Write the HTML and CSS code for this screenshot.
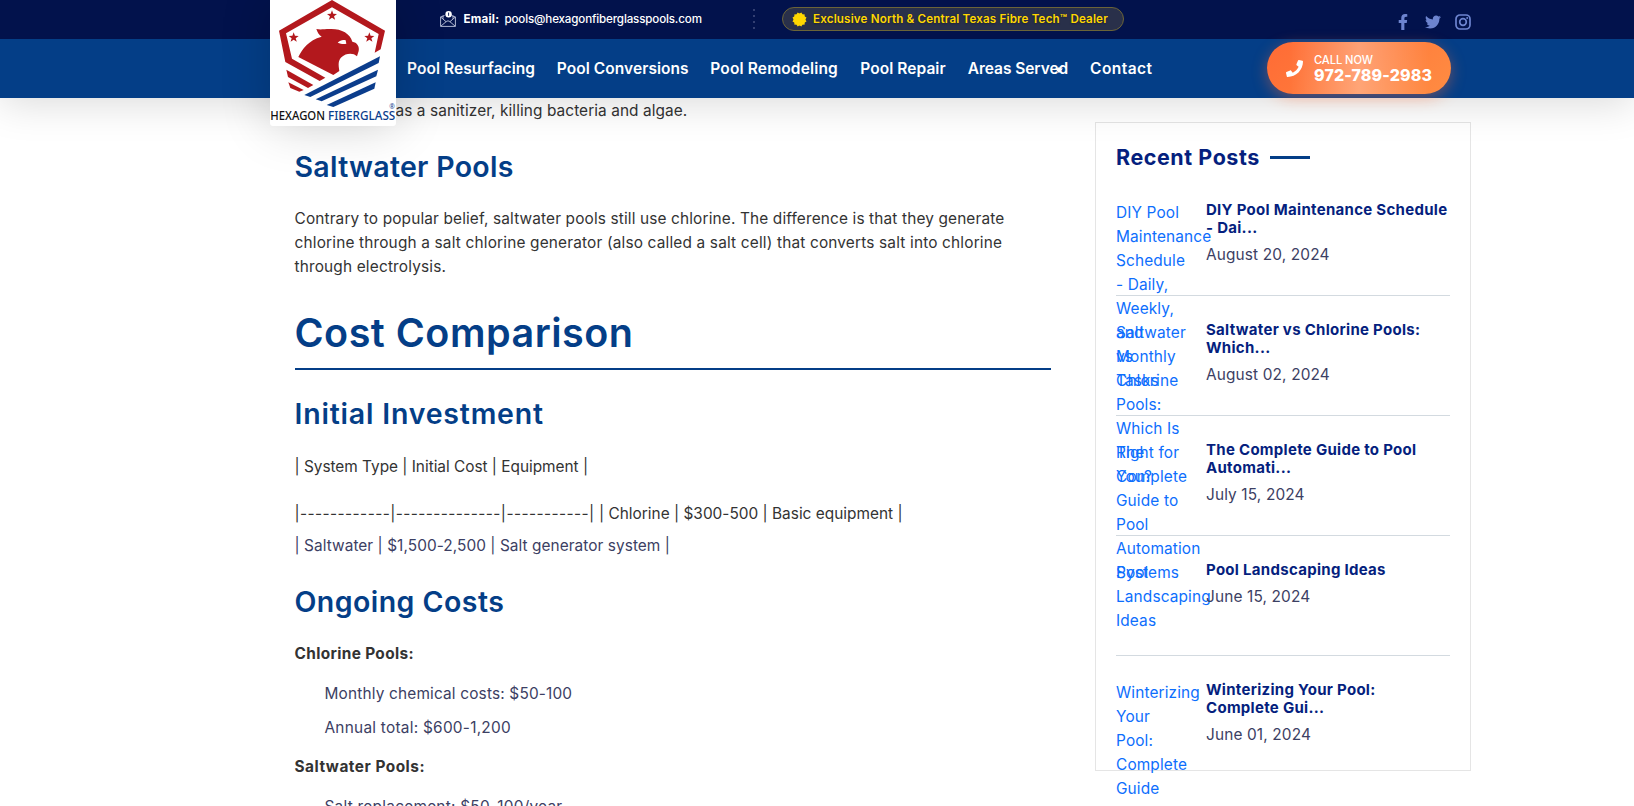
FILE: index.html
```html
<!DOCTYPE html>
<html lang="en">
<head>
<meta charset="utf-8">
<title>Hexagon Fiberglass Pools</title>
<link rel="stylesheet" href="styles.css">
</head>
<body>
<header class="header">
  <div class="topbar">
    <div class="container topbar-inner">
      <svg class="mail-icon" viewBox="0 0 16 16" fill="none" stroke="#c3c9e0" stroke-width="0.9">
        <path d="M4.5 4.5L.6 6v9.4h14.8V6l-3.900-1.500M.6 6l5.600 4.800M15.400 6l-5.600 4.800M.8 15.200l5.400-4.600c1-.9 2.600-.9 3.600 0l5.400 4.600M3 4.600v3.300M13 4.600v3.300"/>
        <circle cx="8.600" cy="3.200" r="3.200" fill="#fff" stroke="none"/>
        <path d="M8.600 1.600v3.200" stroke="#02124c"/>
      </svg>
      <strong class="email-label">Email:</strong>
      <span class="email">pools@hexagonfiberglasspools.com</span>
      <span class="dots"><i></i><i></i><i></i><i></i></span>
      <div class="dealer">
        <svg viewBox="0 0 14 14" fill="#ffd700"><rect x="2.200" y="2.200" width="9.600" height="9.600"/><rect x="2.200" y="2.200" width="9.600" height="9.600" transform="rotate(30 7 7)"/><rect x="2.200" y="2.200" width="9.600" height="9.600" transform="rotate(60 7 7)"/></svg>
        <span>Exclusive North &amp; Central Texas Fibre Tech™ Dealer</span>
      </div>
      <div class="social">
        <svg class="fb" viewBox="0 0 320 512"><path d="M279.140 288l14.220-92.660h-88.910v-60.130c0-25.350 12.420-50.060 52.240-50.060h40.420V6.260S260.430 0 225.360 0c-73.220 0-121.080 44.380-121.080 124.720v70.620H22.890V288h81.390v224h100.170V288z"/></svg>
        <svg class="tw" viewBox="0 0 512 512"><path d="M459.370 151.716c.325 4.548.325 9.097.325 13.645 0 138.720-105.583 298.558-298.558 298.558-59.452 0-114.680-17.219-161.137-47.106 8.447.974 16.568 1.299 25.340 1.299 49.055 0 94.213-16.568 130.274-44.832-46.132-.975-84.792-31.188-98.112-72.772 6.498.974 12.995 1.624 19.818 1.624 9.421 0 18.843-1.300 27.614-3.573-48.081-9.747-84.143-51.980-84.143-102.985v-1.299c13.969 7.797 30.214 12.670 47.431 13.319-28.264-18.843-46.781-51.005-46.781-87.391 0-19.492 5.197-37.360 14.294-52.954 51.655 63.675 129.300 105.258 216.365 109.807-1.624-7.797-2.599-15.918-2.599-24.040 0-57.828 46.782-104.934 104.934-104.934 30.213 0 57.502 12.670 76.670 33.137 23.715-4.548 46.456-13.320 66.599-25.340-7.798 24.366-24.366 44.833-46.132 57.827 21.117-2.273 41.584-8.122 60.426-16.243-14.292 20.791-32.161 39.308-52.628 54.253z"/></svg>
        <svg class="ig" viewBox="0 0 16 16" fill="none"><rect x="1" y="1" width="14" height="14" rx="4" stroke="#6d84cf" stroke-width="1.700"/><circle cx="8" cy="8" r="3.300" stroke="#6d84cf" stroke-width="1.700"/><circle cx="12.200" cy="3.900" r="1" fill="#6d84cf"/></svg>
      </div>
    </div>
  </div>
  <div class="navbar">
    <div class="container nav-inner">
      <nav class="menu">
        <a class="m1">Pool Resurfacing</a>
        <a class="m2">Pool Conversions</a>
        <a class="m3">Pool Remodeling</a>
        <a class="m4">Pool Repair</a>
        <a class="m5">Areas Served<svg class="caret" viewBox="0 0 8 6"><path d="M0 1.500h2.500L4 0l1.500 1.500H8L4 6z" fill="#fff"/></svg></a>
        <a class="m6">Contact</a>
      </nav>
      <a class="call">
        <svg viewBox="0 0 512 512" fill="#fff"><path d="M493.400 24.600l-104-24c-11.300-2.600-22.900 3.300-27.500 13.900l-48 112c-4.200 9.800-1.400 21.300 6.900 28l60.600 49.600c-36 76.700-98.900 140.500-177.200 177.200l-49.600-60.600c-6.800-8.300-18.200-11.100-28-6.900l-112 48C3.900 366.500-2 378.100.6 389.400l24 104C27.100 504.200 36.700 512 48 512c256.100 0 464-207.500 464-464 0-11.200-7.700-20.900-18.600-23.400z"/></svg>
        <span class="call-text"><span class="call-now">CALL NOW</span><strong>972-789-2983</strong></span>
      </a>
    </div>
  </div>
  <div class="logo">
    <svg viewBox="0 0 378 378">
      <g fill="#b3181d">
        <path d="M186 0L345 92 332 148 314 158 326 102 186 22 48 100 66 176 166 233 149 243 46 186 27 92z"/>
        <path d="M49 209L130 255 114 264 54 231z"/>
        <path d="M55 247L101 270 88 275 61 264z"/>
        <path d="M139 87C154 90 166 86 184 87c32 0 56 14 63 38 14 2 22 14 19 28l-5 16c-12-12-34-9-46 2-11 10-10 22-7 42l-18 12L85 171c12-24 30-50 70-61-8-5-13-13-16-23z"/>
        <g>
          <path id="star" d="M186 31l3.800 10.500 11.200.2-8.900 6.900 3.200 10.700-9.300-6.300-9.300 6.300 3.200-10.700-8.900-6.900 11.200-.2z"/>
          <use href="#star" x="-115" y="66"/><use href="#star" x="112" y="66"/>
        </g>
      </g>
      <path d="M203 128c8-8 16-10 24-7l2 10c-9 2-17 0-26-3z" fill="#fff"/>
      <g fill="#0b3d8c">
        <path d="M330 169L326 189 121 291 103 285z"/>
        <path d="M324 209L319 229 155 304 137 298z"/>
        <path d="M317 247L313 266 190 321 170 315z"/>
      </g>
      <text x="1" y="360" class="brand" textLength="164" lengthAdjust="spacingAndGlyphs" fill="#111">HEXAGON</text>
      <text x="174" y="360" class="brand" textLength="202" lengthAdjust="spacingAndGlyphs" fill="#0b3d8c">FIBERGLASS</text>
      <text x="358" y="328" class="reg" fill="#0b3d8c">®</text>
    </svg>
  </div>
</header>

<main class="container page">
  <article class="article">
    <p class="p-first">as a sanitizer, killing bacteria and algae.</p>
    <h3 class="h-salt">Saltwater Pools</h3>
    <p class="p-salt">Contrary to popular belief, saltwater pools still use chlorine. The difference is that they generate<br><span class="p-wide">chlorine through a salt chlorine generator (also called a salt cell) that converts salt into chlorine</span><br><span class="p-wide">through electrolysis.</span></p>
    <h2>Cost Comparison</h2>
    <h3 class="h-init">Initial Investment</h3>
    <p class="row-head">| System Type | Initial Cost | Equipment |</p>
    <p class="row-one"><span class="dashes">|------------|--------------|-----------|</span> <span class="cells">| Chlorine | $300-500 | Basic equipment |</span></p>
    <div class="row-two">| Saltwater | $1,500-2,500 | Salt generator system |</div>
    <h3 class="h-ongo">Ongoing Costs</h3>
    <p class="kind k-chlor">Chlorine Pools:</p>
    <ul>
      <li class="l-month">Monthly chemical costs: $50-100</li>
      <li class="l-year">Annual total: $600-1,200</li>
    </ul>
    <p class="kind k-salt">Saltwater Pools:</p>
    <ul>
      <li class="l-year">Salt replacement: $50-100/year</li>
    </ul>
  </article>

  <aside class="sidebar">
    <h4 class="side-title">Recent Posts</h4>
    <div class="post">
      <a class="thumb">DIY Pool Maintenance Schedule - Daily, Weekly, and Monthly Tasks</a>
      <div class="post-body"><h5>DIY Pool Maintenance Schedule<br>- Dai...</h5><span>August 20, 2024</span></div>
    </div>
    <div class="post">
      <a class="thumb">Saltwater vs Chlorine Pools: Which Is Right for You?</a>
      <div class="post-body"><h5>Saltwater vs Chlorine Pools:<br>Which...</h5><span>August 02, 2024</span></div>
    </div>
    <div class="post">
      <a class="thumb">The Complete Guide to Pool Automation Systems</a>
      <div class="post-body"><h5>The Complete Guide to Pool<br>Automati...</h5><span>July 15, 2024</span></div>
    </div>
    <div class="post">
      <a class="thumb">Pool Landscaping Ideas</a>
      <div class="post-body"><h5>Pool Landscaping Ideas</h5><span>June 15, 2024</span></div>
    </div>
    <div class="post">
      <a class="thumb">Winterizing Your Pool: Complete Guide</a>
      <div class="post-body"><h5>Winterizing Your Pool:<br>Complete Gui...</h5><span>June 01, 2024</span></div>
    </div>
  </aside>
</main>
</body>
</html>
```
FILE: styles.css
```css
* { box-sizing: border-box; margin: 0; padding: 0; }
html, body { height: 806px; overflow: hidden; }
body {
  background: #fff;
  color: #333;
  font: 15.4px/24px Inter, "Open Sans", sans-serif;
  letter-spacing: .14px;
}
svg { display: block; flex: none; }
ul { list-style: none; }
.container { width: 1201px; margin-left: 270px; }

/* header */
.header { position: relative; z-index: 5; height: 98px; box-shadow: 0 5px 40px rgba(0, 0, 0, .15); }
.topbar { height: 39px; background: #02124c; color: #fff; }
.topbar-inner { display: flex; align-items: center; height: 38px; padding-left: 170px; font-size: 11.6px; }
.mail-icon { width: 16px; height: 16px; }
.email-label { margin-left: 7.500px; width: 41px; font-weight: 700; letter-spacing: .2px; }
.email { width: 197px; letter-spacing: -.15px; white-space: nowrap; font-weight: 500; }
.dots { display: grid; gap: 4px; margin-left: 51.500px; width: 29px; }
.dots i { width: 2px; height: 2px; background: #333f72; }
.dealer {
  display: flex; align-items: center; gap: 6px;
  width: 342px; height: 24px; padding-left: 9px;
  border: 1px solid #6b6438; border-radius: 12px;
  background: #29304a; color: #ffd700;
  white-space: nowrap; font-weight: 600;
  text-shadow: 0 1px 2px rgba(0, 0, 0, .3);
}
.dealer svg { width: 15px; height: 15px; }
.dealer span { font-size: 11.6px; letter-spacing: .17px; }
.social { display: flex; align-items: center; margin-left: auto; padding-top: 6px; fill: #6d84cf; }
.fb { width: 10px; height: 16px; }
.tw { width: 16px; height: 16px; margin-left: 17px; }
.ig { width: 16px; height: 16px; margin-left: 14px; }

.navbar { height: 59px; background: #043e87; }
.nav-inner { display: flex; height: 59px; padding: 3px 20px 0 137px; justify-content: space-between; }
.menu { display: flex; align-items: center; gap: 22px; height: 54px; color: #fff; font-size: 15.500px; font-weight: 600; white-space: nowrap; }
.m1 { width: 127.800px; letter-spacing: .06px; }
.m2 { width: 131.500px; letter-spacing: .06px; }
.m3 { width: 128px; letter-spacing: .15px; }
.m4 { width: 85.500px; letter-spacing: .06px; }
.m5 { width: 100.300px; letter-spacing: -.05px; position: relative; }
.m6 { width: 62px; letter-spacing: .42px; }
.caret { position: absolute; right: 5px; top: 10px; width: 8px; height: 6px; }
.call {
  display: flex; align-items: center; gap: 11px;
  width: 184px; height: 52px; padding-left: 19px;
  border-radius: 26px; color: #fff;
  background:
    linear-gradient(90deg, rgba(255, 255, 255, 0) 12%, rgba(255, 255, 255, .3) 50%, rgba(255, 255, 255, 0) 88%),
    linear-gradient(135deg, #ff6b35, #ff8c42);
  box-shadow: 0 4px 15px rgba(255, 107, 53, .4);
}
.call svg { width: 17px; height: 17px; }
.call-text { display: flex; flex-direction: column; }
.call-now { font-size: 11.200px; line-height: 14px; font-weight: 500; letter-spacing: -.1px; }
.call strong { font-size: 16px; line-height: 17px; font-weight: 800; }

.logo {
  position: absolute; left: 270px; top: 0; width: 126px; height: 126px;
  background: #fff; border-radius: 0 0 3px 3px;
  box-shadow: 0 0 50px rgba(0, 0, 0, .18);
}
.brand { font: 500 36px "Noto Sans", sans-serif; letter-spacing: 0; }
.reg { font: 20px "Noto Sans", sans-serif; letter-spacing: 0; }

/* article */
.page { display: flex; justify-content: space-between; padding-left: 24.500px; }
.article { width: 756px; padding-top: 1px; white-space: nowrap; }
h2, h3 { color: #043e87; font-weight: 600; }
h3 { margin-top: 27px; font-size: 28.500px; line-height: 34px; }
.p-first { padding-left: 101px; letter-spacing: .08px; }
.h-salt { letter-spacing: .3px; }
.p-salt { margin-top: 23px; }
.p-wide { letter-spacing: .17px; }
h2 { margin-top: 31px; padding-bottom: 12px; border-bottom: 2px solid #043e87; font-size: 39.500px; line-height: 46px; letter-spacing: .5px; }
.h-init { letter-spacing: .8px; }
.row-head { margin-top: 24px; letter-spacing: -.02px; }
.row-one { display: flex; gap: 4.500px; margin-top: 23px; }
.dashes { width: 300px; letter-spacing: .43px; }
.cells { letter-spacing: .01px; }
.row-two { margin-top: 8px; color: #3c4063; letter-spacing: .06px; }
.h-ongo { letter-spacing: .45px; }
.kind { font-weight: 700; }
.k-chlor { margin-top: 23px; letter-spacing: .35px; }
.k-salt { margin-top: 15px; letter-spacing: .5px; }
li { margin: 16px 0 0 30px; color: #3c4063; }
li + li { margin-top: 10px; }
.l-month { letter-spacing: .17px; }
.l-year { letter-spacing: .25px; }

/* sidebar */
.sidebar { width: 376px; height: 649px; margin-top: 24px; padding: 18px 20px 0; border: 1px solid #e5e5e5; }
.side-title { display: flex; align-items: center; gap: 10px; height: 31px; margin-bottom: 4px; padding-top: 1px; color: #051f7e; font-size: 21.500px; font-weight: 700; letter-spacing: .550px; white-space: nowrap; }
.side-title::after { content: ""; width: 40px; height: 3px; background: #043e87; }
.post { display: flex; gap: 20px; height: 120px; padding-top: 25px; border-bottom: 1px solid #d3dae0; }
.post:last-child { border-bottom: 0; }
.thumb { width: 70px; height: 70px; flex: none; color: #0d6efd; }
.post-body { white-space: nowrap; color: #3c4063; }
h5 { margin-bottom: 6px; color: #051f7e; font-size: 15px; line-height: 18px; font-weight: 700; letter-spacing: .29px; }
```
